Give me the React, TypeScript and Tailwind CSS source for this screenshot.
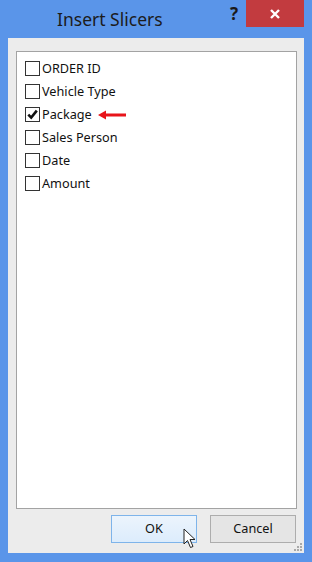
import React from "react";

const fields = [
  { label: "ORDER ID", checked: false },
  { label: "Vehicle Type", checked: false },
  { label: "Package", checked: true },
  { label: "Sales Person", checked: false },
  { label: "Date", checked: false },
  { label: "Amount", checked: false },
];

function CheckBox({ checked }: { checked: boolean }) {
  return (
    <div className="flex h-[15px] w-[15px] shrink-0 items-center justify-center border border-[#333] bg-white">
      {checked && (
        <svg width="11" height="11" viewBox="0 0 11 11">
          <path d="M1.3 5.6 L4.2 8.6 L9.8 1.6" fill="none" stroke="#111" strokeWidth="2.6" />
        </svg>
      )}
    </div>
  );
}

export default function App() {
  return (
    <div
      className="flex h-[562px] w-[312px] flex-col bg-[#5a95e9] text-[#111]"
      style={{ fontFamily: "'Noto Sans', 'Open Sans', sans-serif" }}
    >
      {/* barra de título */}
      <div className="relative flex h-[38px] shrink-0 items-start">
        <div className="ml-[57px] mt-[7px] text-[17.5px] leading-[24px] text-[#1c1c1c]">Insert Slicers</div>
        <div className="ml-auto flex items-start">
          <div className="mt-[4px] mr-[8px] text-[17px] font-bold leading-[20px] text-[#1a1a1a]">?</div>
          <div className="mr-[8px] flex h-[27px] w-[58px] items-center justify-center bg-[#c23b3f]">
            <svg width="12" height="12" viewBox="0 0 12 12">
              <path d="M2 2 L10 10 M10 2 L2 10" stroke="white" strokeWidth="2.4" />
            </svg>
          </div>
        </div>
      </div>

      {/* cuerpo */}
      <div className="mx-[8px] mb-[9px] flex flex-1 flex-col bg-[#ececec] pl-[8px] pr-[7px] pt-[13px]">
        <div className="flex h-[458px] flex-col gap-[8px] border border-[#a3a3a3] bg-white pl-[8px] pt-[9px]">
          {fields.map((f) => (
            <div key={f.label} className="flex h-[15px] items-center gap-[2px]">
              <CheckBox checked={f.checked} />
              <span className="text-[12.7px] leading-[15px]">{f.label}</span>
              {f.checked && (
                <svg width="29" height="10" viewBox="0 0 29 10" className="ml-[4px]">
                  <path d="M0 5 L8 0.5 L8 3.5 L28 3.5 L28 6.5 L8 6.5 L8 9.5 Z" fill="#e8141a" />
                </svg>
              )}
            </div>
          ))}
        </div>

        <div className="relative mr-[1px] mt-[6px] flex justify-end gap-[13px]">
          <div className="relative flex h-[28px] w-[86px] items-center justify-center border border-[#7eb4ea] bg-gradient-to-b from-[#ecf4fc] to-[#dcecfc] text-[12.7px]">
            OK
            <svg width="16" height="22" viewBox="0 0 16 22" className="absolute left-[71px] top-[12px]">
              <path d="M1 1 L1 16 L4.5 12.5 L7.5 19.5 L10 18.5 L7 11.5 L12 11.5 Z" fill="white" stroke="#222" strokeWidth="1" />
            </svg>
          </div>
          <div className="flex h-[28px] w-[86px] items-center justify-center border border-[#adadad] bg-[#e5e5e5] text-[12.7px]">
            Cancel
          </div>
          <svg width="10" height="10" viewBox="0 0 10 10" className="absolute right-[-7px] top-[27px]">
            <rect x="7" y="1" width="2" height="2" fill="#a8a8a8" />
            <rect x="4" y="4" width="2" height="2" fill="#a8a8a8" />
            <rect x="7" y="4" width="2" height="2" fill="#a8a8a8" />
            <rect x="1" y="7" width="2" height="2" fill="#a8a8a8" />
            <rect x="4" y="7" width="2" height="2" fill="#a8a8a8" />
            <rect x="7" y="7" width="2" height="2" fill="#a8a8a8" />
          </svg>
        </div>
      </div>
    </div>
  );
}
